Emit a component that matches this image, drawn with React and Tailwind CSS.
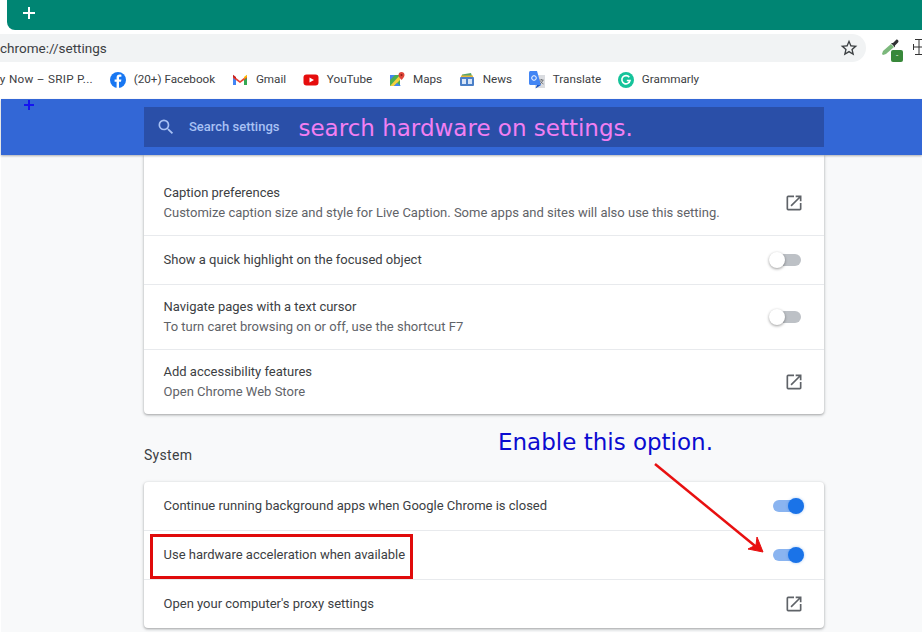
import { MdOpenInNew, MdSearch, MdStarBorder } from "react-icons/md";

const ROBOTO = "font-['Roboto',sans-serif]";

function Toggle({ on }) {
  return (
    <div className={`relative w-[28px] h-[12px] rounded-full ${on ? "bg-[#8ab4f0]" : "bg-[#bdc1c6]"}`}>
      <div
        className={
          on
            ? "absolute top-[-2px] right-[-3px] w-[16px] h-[16px] rounded-full bg-[#1a73e8] shadow-[0_0_3px_rgba(26,115,232,0.4)]"
            : "absolute top-[-2px] left-[-4px] w-[16px] h-[16px] rounded-full bg-white shadow-[0_1px_3px_rgba(0,0,0,0.4)]"
        }
      />
    </div>
  );
}

function Row({ title, sub, height, control, first, boxed }) {
  return (
    <div className={`relative flex items-center justify-between pl-[19.5px] ${height} ${first ? "" : "border-t border-[#e8eaed]"}`}>
      <div>
        <div className="text-[13px] leading-[20px] text-[#3c4043]">{title}</div>
        {sub && <div className="text-[13px] leading-[20px] text-[#5f6368]">{sub}</div>}
      </div>
      {control === "link" && <MdOpenInNew className="mr-5 text-[20px] text-[#5f6368]" />}
      {control === "off" && <div className="mr-[23px]"><Toggle /></div>}
      {control === "on" && <div className="mr-[23px]"><Toggle on /></div>}
      {boxed && <div className="absolute left-[6px] top-[3px] w-[263px] h-[45px] border-[3px] border-[#e00b0b]" />}
    </div>
  );
}

function Bookmark({ icon, label }) {
  return (
    <div className="flex items-center gap-2 shrink-0">
      {icon}
      <span className="text-[11.7px] mb-[2px] text-[#3c4043]">{label}</span>
    </div>
  );
}

const facebook = (
  <svg width="16" height="16" viewBox="0 0 16 16" className="mb-[1px]">
    <circle cx="8" cy="8" r="8" fill="#1877f2" />
    <path d="M9 16V9.8h2l.4-2.4H9V6c0-.8.3-1.2 1.2-1.2h1.2V2.700c-.5-.1-1.100-.2-1.800-.2-1.900 0-3 1.100-3 3.100v1.800H4.600v2.400h2V16z" fill="#fff" />
  </svg>
);

const gmail = (
  <svg width="16" height="16" viewBox="0 0 16 16" className="mb-[1px]">
    <path d="M1 3.500v9.500h3V6.500z" fill="#4285f4" />
    <path d="M15 3.500v9.500h-3V6.500z" fill="#34a853" />
    <path d="M1 3.500 8 9l7-5.500V6L8 11 1 6z" fill="#ea4335" />
    <path d="M1 2.800 4 5v2L1 5z" fill="#c5221f" />
    <path d="M15 2.800 12 5v2l3-2z" fill="#fbbc04" />
  </svg>
);

const youtube = (
  <svg width="16" height="16" viewBox="0 0 16 16" className="mb-[1px]">
    <rect x="0.500" y="2.500" width="15" height="11" rx="3" fill="#e60d0d" />
    <path d="M6.500 5.500v5L11 8z" fill="#fff" />
  </svg>
);

const maps = (
  <svg width="16" height="16" viewBox="0 0 16 16" className="mb-[1px]">
    <path d="M1 3h10v11H1z" fill="#4caf50" />
    <path d="M1 14 11 3v5l-6 6z" fill="#f4d03f" />
    <path d="M5 14l3-3 4 3z" fill="#4285f4" />
    <path d="M1 3h5L1 8z" fill="#4285f4" />
    <path d="M12.500 0C10.800 0 9.500 1.300 9.500 3c0 2 3 5 3 5s3-3 3-5c0-1.700-1.300-3-3-3z" fill="#e0463a" />
    <circle cx="12.500" cy="3" r="1" fill="#8c1d14" />
  </svg>
);

const news = (
  <svg width="16" height="16" viewBox="0 0 16 16" className="mb-[1px]">
    <path d="M3 2.500 12 1l1 3H3z" fill="#5aa469" />
    <rect x="2" y="3.500" width="12" height="2" fill="#e8b93c" />
    <rect x="1" y="5" width="14" height="9" rx="1" fill="#4a7fc8" />
    <rect x="3" y="7" width="4" height="5" fill="#d6e4f7" />
    <rect x="9" y="7" width="4" height="5" fill="#d6e4f7" />
  </svg>
);

const translate = (
  <svg width="16" height="18" viewBox="0 0 16 18" className="mb-[1px]">
    <rect x="6" y="4" width="10" height="13" fill="#dadce0" />
    <path d="M0 1.500C0 .7.700 0 1.500 0H8l4 14H1.500C.7 14 0 13.300 0 12.500z" fill="#4285f4" />
    <path d="M8 14l-1.500 3.500L12 14z" fill="#1a56c4" />
    <circle cx="5" cy="7" r="2.300" fill="none" stroke="#fff" strokeWidth="1" />
    <path d="M10.500 9h4M12.500 8v1M11 13c1.500-1 2.500-2.500 3-4M11.500 10c.5 1.200 1.500 2.400 3 3" fill="none" stroke="#5f6368" strokeWidth="0.800" />
  </svg>
);

const grammarly = (
  <svg width="16" height="16" viewBox="0 0 16 16" className="mb-[1px]">
    <circle cx="8" cy="8" r="8" fill="#15c39a" />
    <path d="M11.300 5.300A4.100 4.100 0 1 0 12 8.500H8.800" fill="none" stroke="#fff" strokeWidth="1.600" />
  </svg>
);

function App() {
  return (
    <div className={`relative w-[922px] h-[643px] overflow-hidden bg-white ${ROBOTO}`}>
      {/* tab strip */}
      <div className="ml-[7px] h-[30px] rounded-bl-[8px] bg-[#008573] flex items-center pl-[16px]">
        <svg width="12" height="12" viewBox="0 0 12 12" className="mb-[4px]">
          <path d="M6 0v12M0 6h12" stroke="#fff" strokeWidth="2" />
        </svg>
      </div>

      {/* address bar */}
      <div className="h-[32px] pt-[4px] flex items-start">
        <div className="w-[866px] h-[28px] rounded-r-full bg-[#f1f3f4] flex items-center justify-between pr-[7px]">
          <span className="text-[13.500px] text-[#3c4043]">chrome://settings</span>
          <MdStarBorder className="text-[20px] text-[#3c4043]" />
        </div>
        <div className="relative ml-[15px] mt-[5px] w-[24px] h-[23px] shrink-0">
          <svg width="18" height="17" viewBox="0 0 18 17">
            <path d="M1 15 2 12 10 5l3 3-8 7-3 1z" fill="#7cb87c" />
            <path d="M10 4l2 0 3-3c1-1 2.500 0 2.500 1.500l-.5 1-3 3v2z" fill="#303134" />
          </svg>
          <div className="absolute left-[10px] top-[11px] w-[12px] h-[12px] rounded-[2px] bg-[#38883a] flex items-center justify-center text-[8px] leading-none text-white">-</div>
        </div>
        <svg width="9" height="16" viewBox="0 0 9 16" className="ml-[8px] mt-[5px] shrink-0">
          <path d="M0 8h9M6 0v16M2 .5h7M2 15.500h7M.5 5v6" stroke="#333" strokeWidth="1" fill="none" />
        </svg>
      </div>

      {/* bookmarks */}
      <div className="h-[37px] flex items-center gap-[16.7px] bg-white">
        <div className="w-[93px] shrink-0 overflow-hidden flex justify-end">
          <span className="text-[11.7px] tracking-[0.3px] mb-[2px] text-[#3c4043] whitespace-nowrap">Apply Now – SRIP P...</span>
        </div>
        <Bookmark icon={facebook} label="(20+) Facebook" />
        <Bookmark icon={gmail} label="Gmail" />
        <Bookmark icon={youtube} label="YouTube" />
        <Bookmark icon={maps} label="Maps" />
        <Bookmark icon={news} label="News" />
        <Bookmark icon={translate} label="Translate" />
        <Bookmark icon={grammarly} label="Grammarly" />
      </div>

      {/* settings header */}
      <div className="ml-[1px] h-[56px] bg-[#3367d6] pl-[143px] pt-[8px] shadow-[0_1px_2px_rgba(60,64,67,0.4)] relative z-10">
        <div className="w-[680px] h-[40px] bg-[#2a4fa8] flex items-center pl-[12px]">
          <MdSearch className="text-[20px] text-[#a8c1f4]" />
          <span className="ml-[13px] text-[13px] font-medium text-[#a8c1f4]">Search settings</span>
          <span className="ml-[19px] mt-[2px] text-[23px] leading-none text-[#f27ff2] font-['DejaVu_Sans',sans-serif]">search hardware on settings.</span>
        </div>
      </div>

      {/* settings body */}
      <div className="ml-[1px] h-[477px] bg-[#f8f9fa] pl-[143px]">
        <div className="w-[680px] bg-white rounded-b-[4px] shadow-[0_1px_2px_rgba(60,64,67,0.3),0_1px_3px_1px_rgba(60,64,67,0.15)]">
          <Row first height="h-[80px] pt-[16px]" title="Caption preferences" sub="Customize caption size and style for Live Caption. Some apps and sites will also use this setting." control="link" />
          <Row height="h-[49px]" title="Show a quick highlight on the focused object" control="off" />
          <Row height="h-[65px]" title="Navigate pages with a text cursor" sub="To turn caret browsing on or off, use the shortcut F7" control="off" />
          <Row height="h-[65px]" title="Add accessibility features" sub="Open Chrome Web Store" control="link" />
        </div>
        <div className="h-[68px] pt-[31px] text-[14px] leading-[20px] text-[#3c4043] tracking-[0.3px]">System</div>
        <div className="w-[680px] bg-white rounded-[4px] shadow-[0_1px_2px_rgba(60,64,67,0.3),0_1px_3px_1px_rgba(60,64,67,0.15)]">
          <Row first height="h-[48px]" title="Continue running background apps when Google Chrome is closed" control="on" />
          <Row boxed height="h-[49px]" title="Use hardware acceleration when available" control="on" />
          <Row height="h-[49px]" title="Open your computer's proxy settings" control="link" />
        </div>
      </div>

      {/* annotations drawn over the capture */}
      <svg width="12" height="12" viewBox="0 0 12 12" className="absolute left-[23px] top-[99px] z-20">
        <path d="M6 1v10M1 6h10" stroke="#1414f0" strokeWidth="2" />
      </svg>
      <div className="absolute left-[498px] top-[427px] text-[23px] leading-[30px] text-[#0b0bd0] font-['DejaVu_Sans',sans-serif] whitespace-nowrap">Enable this option.</div>
      <svg width="130" height="100" viewBox="0 0 130 100" className="absolute left-[650px] top-[460px]">
        <path d="M5 4 110 90" stroke="#e81010" strokeWidth="2.500" />
        <path d="M113 92 98 89 106 85 107 77z" fill="#e81010" stroke="#e81010" strokeWidth="1" />
      </svg>
    </div>
  );
}

export default App;
